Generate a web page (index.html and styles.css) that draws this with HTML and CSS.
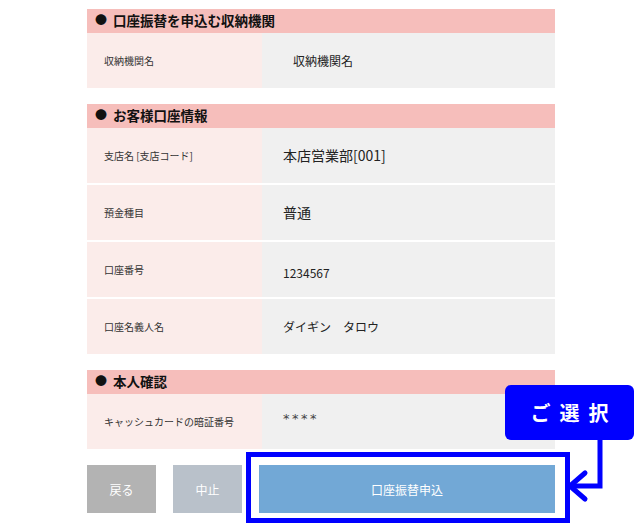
FILE: index.html
```html
<!DOCTYPE html>
<html lang="ja">
<head>
<meta charset="utf-8">
<link rel="stylesheet" href="styles.css">
</head>
<body>
<div class="page">
  <section class="sec">
    <h2 class="sec-head"><span class="dot">●</span>口座振替を申込む収納機関</h2>
    <div class="row"><div class="lbl">収納機関名</div><div class="val val-sm indent">収納機関名</div></div>
  </section>
  <section class="sec">
    <h2 class="sec-head"><span class="dot">●</span>お客様口座情報</h2>
    <div class="row"><div class="lbl">支店名 [支店コード]</div><div class="val val-lg">本店営業部[001]</div></div>
    <div class="row"><div class="lbl">預金種目</div><div class="val val-lg">普通</div></div>
    <div class="row"><div class="lbl">口座番号</div><div class="val val-sm low">1234567</div></div>
    <div class="row"><div class="lbl">口座名義人名</div><div class="val val-sm">ダイギン　タロウ</div></div>
  </section>
  <section class="sec">
    <h2 class="sec-head"><span class="dot">●</span>本人確認</h2>
    <div class="row"><div class="lbl">キャッシュカードの暗証番号</div><div class="val high">****</div></div>
  </section>
  <div class="btns">
    <button class="btn btn-back">戻る</button>
    <button class="btn btn-stop">中止</button>
    <button class="btn btn-main">口座振替申込</button>
  </div>
</div>
<div class="frame"></div>
<div class="callout">ご選択</div>
<svg class="arrow" width="50" height="70" viewBox="0 0 50 70">
  <polyline points="35,0 35,48 6,48" fill="none" stroke="#0000ff" stroke-width="5"/>
  <polyline points="20,35 5,48 20,61" fill="none" stroke="#0000ff" stroke-width="5" stroke-linecap="round" stroke-linejoin="round"/>
</svg>
</body>
</html>
```
FILE: styles.css
```css
* { box-sizing: border-box; }
html, body { margin: 0; padding: 0; background: #fff; }
body {
  font-family: "Noto Sans CJK JP", "Noto Sans", sans-serif;
  color: #222;
  width: 640px;
  height: 526px;
  position: relative;
  overflow: hidden;
}
.page {
  width: 468px;
  margin-left: 87px;
  padding-top: 9px;
}
.sec { margin-bottom: 16px; }
.sec-head {
  margin: 0;
  height: 24px;
  background: #f6bebb;
  font-size: 13.5px;
  font-weight: 700;
  line-height: 22px;
  padding-left: 8px;
  padding-bottom: 2px;
  color: #111;
  display: flex;
  align-items: center;
}
.dot { font-size: 12px; margin-right: 6px; }
.row {
  display: flex;
  height: 55px;
}
.row + .row { margin-top: 2px; }
.lbl {
  width: 175px;
  background: #fbecea;
  font-size: 10px;
  padding-left: 17px;
  display: flex;
  align-items: center;
  color: #333;
}
.val {
  flex: 1;
  background: #f0f0f0;
  padding-left: 21px;
  display: flex;
  align-items: center;
  color: #222;
}
.val-sm { font-size: 12px; }
.val-lg { font-size: 14px; padding-bottom: 2px; }
.indent { padding-left: 31px; }
.low { padding-top: 6px; }
.high {
  padding-bottom: 6px;
  font-family: "DejaVu Sans", sans-serif;
  font-size: 13px;
  letter-spacing: 2.5px;
  color: #444;
}
.btns {
  display: flex;
  gap: 17px;
  height: 48px;
}
.btn {
  border: 0;
  margin: 0;
  padding: 0;
  height: 48px;
  color: #fff;
  font-family: inherit;
  font-size: 12px;
}
.btn-back { width: 69px; background: #b3b3b3; }
.btn-stop { width: 69px; background: #b9c1ca; }
.btn-main { flex: 1; background: #72a8d6; }
.frame {
  position: absolute;
  left: 246px;
  top: 452px;
  width: 324px;
  height: 71px;
  border: 5px solid #0000ff;
}
.callout {
  position: absolute;
  left: 505px;
  top: 385px;
  width: 129px;
  height: 55px;
  border-radius: 6px;
  background: #0000ff;
  color: #fff;
  font-size: 20px;
  font-weight: 700;
  letter-spacing: 9px;
  text-indent: 9px;
  display: flex;
  align-items: center;
  justify-content: center;
}
.arrow {
  position: absolute;
  left: 565px;
  top: 438px;
}
```
